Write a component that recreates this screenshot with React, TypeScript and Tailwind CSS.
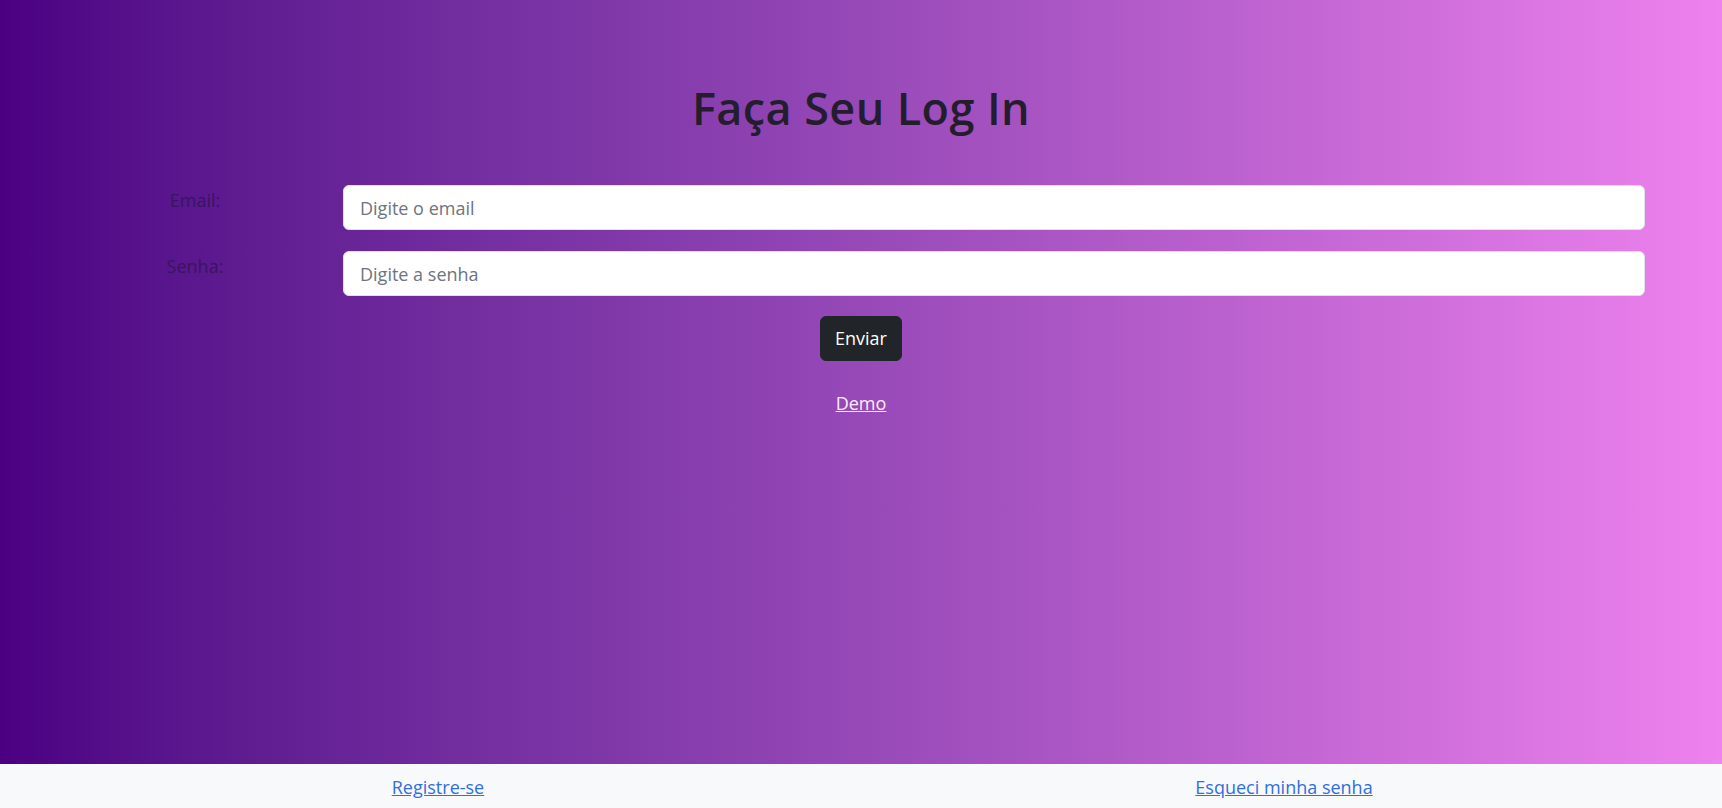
import React from "react";

export default function App() {
  return (
    <div className="w-full h-[808px] flex flex-col font-['Open_Sans','Noto_Sans',sans-serif] text-[18px] leading-[1.5] text-[#212529] overflow-hidden">
      <main className="flex-1 bg-gradient-to-r from-[#4b0082] to-[#ee82ee] flex flex-col">
        <h1 className="mt-[81px] text-center text-[45px] leading-[1.2] tracking-[0.4px] font-semibold text-[#241d2e]">
          Faça Seu Log In
        </h1>
        <form className="mt-[50px] px-[77px] flex flex-col gap-[21px]">
          <div className="flex gap-[30px]">
            <label className="w-[236px] shrink-0 text-center pt-[2px] text-[#3a1461]">Email:</label>
            <input
              type="email"
              placeholder="Digite o email"
              className="flex-1 h-[45px] bg-white border border-[#dee2e6] rounded-[6px] pl-[16px] pr-[14px] text-[18px] text-[#212529] placeholder:text-[#6c757d] outline-none"
            />
          </div>
          <div className="flex gap-[30px]">
            <label className="w-[236px] shrink-0 text-center pt-[2px] text-[#3a1461]">Senha:</label>
            <input
              type="password"
              placeholder="Digite a senha"
              className="flex-1 h-[45px] bg-white border border-[#dee2e6] rounded-[6px] pl-[16px] pr-[14px] text-[18px] text-[#212529] placeholder:text-[#6c757d] outline-none"
            />
          </div>
          <div className="flex justify-center -mt-[1px]">
            <button
              type="button"
              className="h-[45px] px-[14px] bg-[#212529] text-white rounded-[6px] border border-[#212529] text-[18px]"
            >
              Enviar
            </button>
          </div>
        </form>
        <div className="mt-[29px] flex justify-center">
          <a href="#" className="text-[#fbeefb] underline">Demo</a>
        </div>
      </main>
      <footer className="h-[44px] shrink-0 bg-[#f8f9fa] px-[15px] grid grid-cols-2 pt-[10px]">
        <div className="text-center">
          <a href="#" className="text-[#2f6fe0] underline">Registre-se</a>
        </div>
        <div className="text-center">
          <a href="#" className="text-[#2f6fe0] underline">Esqueci minha senha</a>
        </div>
      </footer>
    </div>
  );
}
